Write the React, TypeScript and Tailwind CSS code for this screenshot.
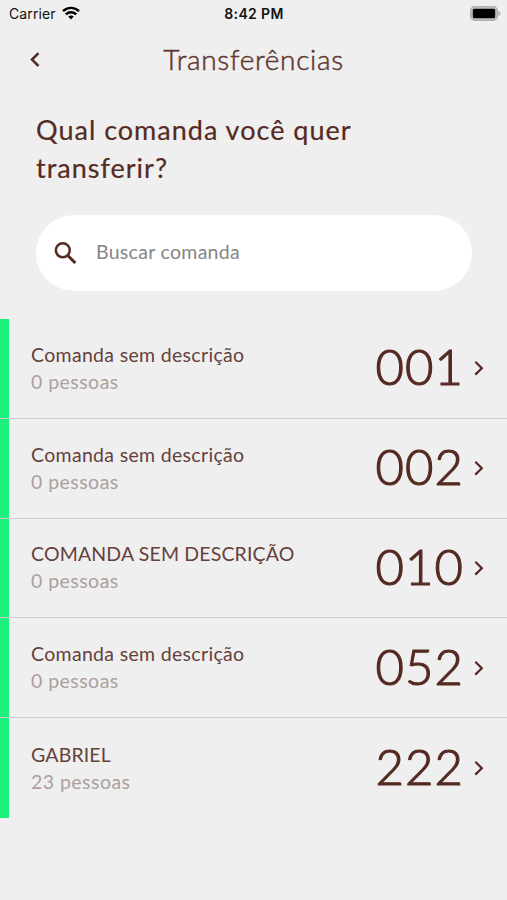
interface Comanda {
  numero:    string
  descricao: string
  pessoas:   number
}

const COMANDAS: Comanda[] = [
  { numero: '001', descricao: 'Comanda sem descrição', pessoas: 0 },
  { numero: '002', descricao: 'Comanda sem descrição', pessoas: 0 },
  { numero: '010', descricao: 'COMANDA SEM DESCRIÇÃO', pessoas: 0 },
  { numero: '052', descricao: 'Comanda sem descrição', pessoas: 0 },
  { numero: '222', descricao: 'GABRIEL', pessoas: 23 },
]

function StatusBar() {
  return (
    <div className="grid h-7 grid-cols-3 items-center pr-[6px] pl-[9px] font-['Inter',sans-serif] text-[14px] leading-none text-[#111]">
      <div className="flex items-center gap-[6px]">
        <span className="tracking-[0.1px]">Carrier</span>
        <svg className="-mt-[2px]" width="18" height="14" viewBox="0 0 18 14" fill="none" stroke="#000" strokeWidth="2.4">
          <path d="M1 5.1C5.5 .8 12.5 .8 17 5.1" />
          <path d="M3.8 8.3C6.8 5.5 11.2 5.5 14.2 8.3" />
          <path d="M6.2 10.5C7.9 9 10.1 9 11.8 10.5L9 13.4Z" fill="#000" stroke="none" />
        </svg>
      </div>
      <span className="-ml-[2px] text-center text-[14px] font-semibold tracking-[0.35px] whitespace-nowrap">8:42 PM</span>
      <svg className="-mt-[2px] justify-self-end" width="31" height="15" viewBox="0 0 31 15">
        <rect x="0.75" y="0.75" width="26.5" height="13.5" rx="4" fill="#c4c4c4" stroke="#b0b0b0" strokeWidth="1.5" />
        <rect x="2.8" y="2.8" width="22.4" height="9.4" rx="1.5" fill="#000" />
        <path d="M28.4 5v5c1.3-.5 2-1.4 2-2.5s-.7-2-2-2.5z" fill="#a9a9a9" />
      </svg>
    </div>
  )
}

function ComandaRow({ comanda, last }: { comanda: Comanda; last: boolean }) {
  const maiusculas = comanda.descricao === comanda.descricao.toUpperCase()

  return (
    <li className={`flex h-[99.8px] items-center pr-[23px] ${last ? '' : 'border-b border-[#cdcdcd]'}`}>
      <div className="w-[9px] self-stretch bg-[#1cf180]" />
      <div className="ml-[22px] min-w-0 flex-1 pb-px text-[19.5px] leading-[27px]">
        <p className={`text-[#65413b] ${maiusculas ? 'tracking-[0.15px]' : 'tracking-[0.32px]'}`}>{comanda.descricao}</p>
        <p className="tracking-[0.45px] text-[#aca09e]">{comanda.pessoas} pessoas</p>
      </div>
      <span className="pb-[3px] text-[49px] leading-none font-light tracking-[1.1px] text-[#552a22] [-webkit-text-stroke:1.2px_#552a22]">{comanda.numero}</span>
      <svg className="ml-[10px]" width="10" height="16" viewBox="0 0 10 16" fill="none" stroke="#552a22" strokeWidth="2.2">
        <path d="M1.3 1.8L7.8 8.2L1.3 14.6" />
      </svg>
    </li>
  )
}

export default function App() {
  return (
    <div className="h-[900px] w-full overflow-hidden bg-[#efefef] font-['Lato',sans-serif]">
      <StatusBar />

      {/* Header */}
      <header className="grid h-[62px] grid-cols-[1fr_auto_1fr] items-center">
        <button className="pl-[29px]" aria-label="Voltar">
          <svg width="12" height="16" viewBox="0 0 12 16" fill="none" stroke="#552a22" strokeWidth="2.5">
            <path d="M9.5 2.2L3 8.6L9.5 15" />
          </svg>
        </button>
        <h1 className="text-[28px] font-light tracking-[0.7px] text-[#5f372f] [-webkit-text-stroke:0.5px_#5f372f]">Transferências</h1>
      </header>

      <h2 className="mt-[21px] ml-[36px] w-[360px] text-[27px] leading-[37.5px] font-normal tracking-[1px] text-[#552a22] [-webkit-text-stroke:0.2px_#552a22]">
        Qual comanda você quer transferir?
      </h2>

      {/* Busca */}
      <label className="mr-[35px] ml-[36px] mt-[29px] flex h-[76px] items-center rounded-full bg-white pr-6 pl-[18px]">
        <svg width="23" height="23" viewBox="0 0 23 23" fill="none" stroke="#552a22">
          <circle cx="8.8" cy="8.3" r="7" strokeWidth="2.5" />
          <path d="M13.8 13.5l7.5 7.5" strokeWidth="3" />
        </svg>
        <input
          className="ml-[19px] flex-1 bg-transparent pb-[3px] text-[19.5px] tracking-[0.3px] text-[#555] outline-none placeholder:text-[#858585]"
          placeholder="Buscar comanda"
        />
      </label>

      <ul className="mt-[28px]">
        {COMANDAS.map((c, i) => (
          <ComandaRow key={c.numero} comanda={c} last={i === COMANDAS.length - 1} />
        ))}
      </ul>
    </div>
  )
}
